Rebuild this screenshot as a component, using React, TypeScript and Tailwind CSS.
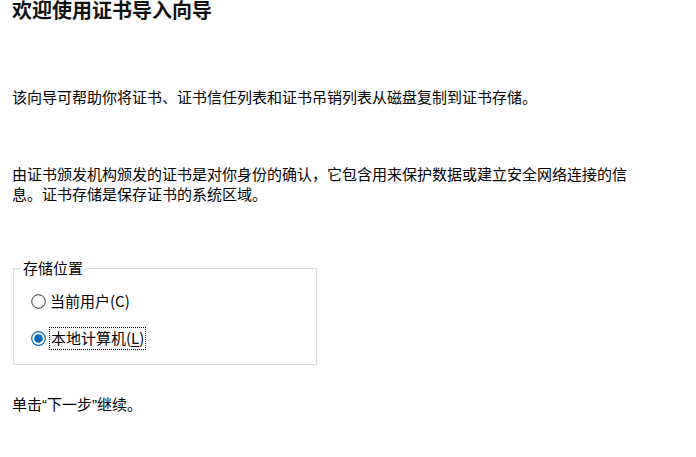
import React from "react";

const font = { fontFamily: '"Microsoft YaHei", "Noto Sans CJK SC", "Noto Sans", sans-serif' };
const latin = { fontFamily: '"Liberation Sans", sans-serif' };

function Radio({ checked }: { checked: boolean }) {
  return (
    <svg width="15" height="15" viewBox="0 0 15 15" className="shrink-0">
      {checked ? (
        <>
          <circle cx="7.5" cy="7.5" r="6.8" fill="#ffffff" stroke="#0067c0" strokeWidth="1.2" />
          <circle cx="7.5" cy="7.5" r="4.3" fill="#0067c0" />
        </>
      ) : (
        <circle cx="7.5" cy="7.5" r="6.8" fill="#ffffff" stroke="#333333" strokeWidth="1" />
      )}
    </svg>
  );
}

export default function App() {
  return (
    <div
      className="w-[696px] h-[457px] bg-white text-black overflow-hidden pl-[12px] flex flex-col"
      style={font}
    >
      <h1 className="text-[20px] leading-[20px] font-bold text-[#111]">欢迎使用证书导入向导</h1>
      <p className="text-[15px] leading-[20px] mt-[67px]">
        该向导可帮助你将证书、证书信任列表和证书吊销列表从磁盘复制到证书存储。
      </p>
      <p className="text-[15px] leading-[20px] mt-[57px] w-[620px]">
        由证书颁发机构颁发的证书是对你身份的确认，它包含用来保护数据或建立安全网络连接的信息。证书存储是保存证书的系统区域。
      </p>
      <fieldset className="mt-[54px] ml-[1px] w-[304px] h-[107px] border border-[#dcdcdc] flex flex-col">
        <legend className="text-[15px] leading-[20px] ml-[7px] px-[2px]">存储位置</legend>
        <div className="flex flex-col pl-[17px] mt-[12px] gap-[15px]">
          <label className="flex items-center h-[22px] text-[15px] leading-[20px]">
            <Radio checked={false} />
            <span className="ml-[4px]">当前用户(C)</span>
          </label>
          <label className="flex items-center h-[22px] text-[15px] leading-[20px]">
            <Radio checked={true} />
            <span className="ml-[3px] px-[1px] h-[23px] flex items-center border border-dotted border-black">
              本地计算机(<span className="underline underline-offset-2">L</span>)
            </span>
          </label>
        </div>
      </fieldset>
      <p className="text-[15px] leading-[20px] mt-[29px]">
        单击<span style={latin}>“</span>下一步<span style={latin}>”</span>继续。
      </p>
    </div>
  );
}
